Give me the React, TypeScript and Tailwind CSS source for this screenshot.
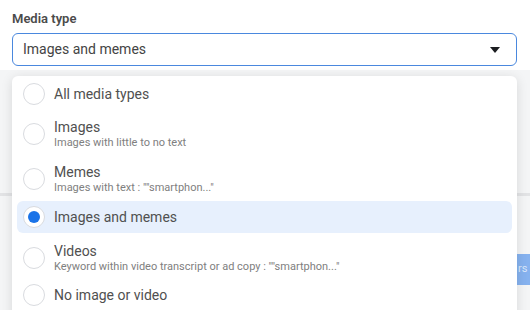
import React from "react";

type Opt = { label: string; sub?: string; selected?: boolean };

const options: Opt[] = [
  { label: "All media types" },
  { label: "Images", sub: "Images with little to no text" },
  { label: "Memes", sub: 'Images with text : ""smartphon..."' },
  { label: "Images and memes", selected: true },
  { label: "Videos", sub: 'Keyword within video transcript or ad copy : ""smartphon..."' },
  { label: "No image or video" },
];

function Radio({ on }: { on?: boolean }) {
  return (
    <div className="w-[22px] h-[22px] rounded-full border border-[#d9dbdf] flex items-center justify-center shrink-0 bg-white">
      {on && <div className="w-[12px] h-[12px] rounded-full bg-[#1a73e8]" />}
    </div>
  );
}

export default function App() {
  return (
    <div
      className="relative w-[530px] h-[310px] overflow-hidden bg-white"
      style={{ fontFamily: "Roboto, 'Liberation Sans', sans-serif" }}
    >
      {/* background page */}
      <div className="flex flex-col h-full">
        <div className="px-[12px] pt-[10px] pb-[4px] bg-white">
          <div className="text-[13px] font-semibold text-[#4b4b4b] leading-[18px] mb-[5px]">Media type</div>
          <div className="h-[33px] w-[505px] rounded-[6px] border border-[#4a88de] flex items-center justify-between pl-[10px] pr-[16px]">
            <span className="text-[14px] text-[#444]">Images and memes</span>
            <svg width="10" height="6" viewBox="0 0 10 6">
              <path d="M0 0 L10 0 L5 6 Z" fill="#1c1e21" />
            </svg>
          </div>
        </div>
        <div className="flex-1 bg-[#f4f5f6] flex flex-col">
          <div className="h-[123px]" />
          <div className="h-[3px] bg-[#e2e3e5]" />
          <div className="flex justify-end pt-[58px]">
            <div className="w-[13px] h-[31px] bg-[#86b2ef] text-[#dbe8fb] text-[11px] flex items-center overflow-hidden pl-[1px]">rs</div>
          </div>
        </div>
      </div>

      {/* dropdown menu overlay */}
      <div className="absolute left-[12px] top-[76px] w-[505px] h-[250px] bg-white rounded-[6px] shadow-[0_2px_12px_rgba(0,0,0,0.12)] px-[5px] pt-[2px] flex flex-col">
        {options.map((o) => (
          <div
            key={o.label}
            className={
              "flex items-center gap-[9px] pl-[6px] rounded-[6px] " +
              (o.sub ? "h-[45px] pt-[3px]" : "h-[32px]") +
              (o.selected ? " bg-[#e7f0fd] my-[1px] h-[30px]" : "")
            }
          >
            <Radio on={o.selected} />
            <div className="flex flex-col">
              <span className="text-[14px] text-[#505050] leading-[16px]">{o.label}</span>
              {o.sub && <span className="text-[11px] text-[#808080] leading-[14px] mt-[1px]">{o.sub}</span>}
            </div>
          </div>
        ))}
      </div>
    </div>
  );
}
